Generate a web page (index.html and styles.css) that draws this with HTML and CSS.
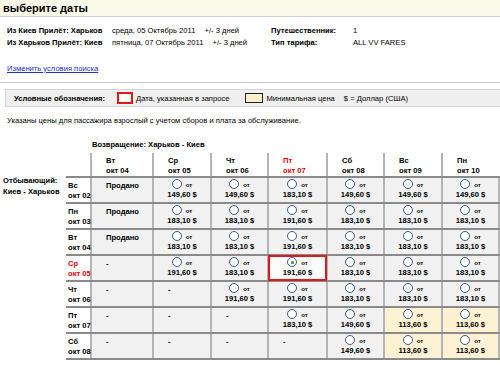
FILE: index.html
```html
<!DOCTYPE html>
<html lang="ru">
<head>
    <meta charset="UTF-8">
    <title>Выберите даты</title>
    <link rel="stylesheet" href="styles.css">
</head>
<body>
    <div class="page-title">выберите даты</div>

    <!-- Summary of the search -->
    <div class="trip-info">
        <span class="strong">Из Киев Прилёт: Харьков</span>
        <span>среда, 05 Октябрь 2011 <span class="flex">+/- 3 дней</span></span>
        <span class="strong">Путешественник:</span>
        <span>1</span>

        <span class="strong">Из Харьков Прилёт: Киев</span>
        <span>пятница, 07 Октябрь 2011 <span class="flex">+/- 3 дней</span></span>
        <span class="strong">Тип тарифа:</span>
        <span>ALL VV FARES</span>
    </div>

    <a class="change-link" href="#">Изменить условия поиска</a>
    <div class="divider"></div>

    <div class="legend">
        <span class="strong">Условные обозначения:</span>
        <span class="swatch swatch-request"></span>
        <span>Дата, указанная в запросе</span>
        <span class="swatch swatch-min"></span>
        <span>Минимальная цена</span>
        <span class="currency">$ = Доллар (США)</span>
    </div>

    <p class="note">Указаны цены для пассажира взрослый с учетом сборов и плата за обслуживание.</p>

    <div class="return-title">Возвращение: Харьков - Киев</div>

    <div class="matrix">
        <div class="outbound-title">Отбывающий:<br>Киев - Харьков</div>
        <table class="fares">
            <colgroup>
                <col style="width:25px">
                <col style="width:62px">
                <col style="width:58px">
                <col style="width:57px">
                <col style="width:59px">
                <col style="width:57px">
                <col style="width:58px">
                <col style="width:57px">
            </colgroup>
            <tr class="head">
                <th class="corner"></th>
                <th>Вт<br>окт 04</th>
                <th>Ср<br>окт 05</th>
                <th>Чт<br>окт 06</th>
                <th class="requested">Пт<br>окт 07</th>
                <th>Сб<br>окт 08</th>
                <th>Вс<br>окт 09</th>
                <th>Пн<br>окт 10</th>
            </tr>
            <tr>
                <th class="day">Вс<br>окт 02</th>
                <td class="text">Продано</td>
                <td><span class="pick"><span class="radio"></span>от</span><span class="price">149,60 $</span></td>
                <td><span class="pick"><span class="radio"></span>от</span><span class="price">149,60 $</span></td>
                <td><span class="pick"><span class="radio"></span>от</span><span class="price">183,10 $</span></td>
                <td><span class="pick"><span class="radio"></span>от</span><span class="price">149,60 $</span></td>
                <td><span class="pick"><span class="radio"></span>от</span><span class="price">149,60 $</span></td>
                <td><span class="pick"><span class="radio"></span>от</span><span class="price">149,60 $</span></td>
            </tr>
            <tr>
                <th class="day">Пн<br>окт 03</th>
                <td class="text">Продано</td>
                <td><span class="pick"><span class="radio"></span>от</span><span class="price">183,10 $</span></td>
                <td><span class="pick"><span class="radio"></span>от</span><span class="price">183,10 $</span></td>
                <td><span class="pick"><span class="radio"></span>от</span><span class="price">191,60 $</span></td>
                <td><span class="pick"><span class="radio"></span>от</span><span class="price">183,10 $</span></td>
                <td><span class="pick"><span class="radio"></span>от</span><span class="price">183,10 $</span></td>
                <td><span class="pick"><span class="radio"></span>от</span><span class="price">183,10 $</span></td>
            </tr>
            <tr>
                <th class="day">Вт<br>окт 04</th>
                <td class="text">Продано</td>
                <td><span class="pick"><span class="radio"></span>от</span><span class="price">183,10 $</span></td>
                <td><span class="pick"><span class="radio"></span>от</span><span class="price">183,10 $</span></td>
                <td><span class="pick"><span class="radio"></span>от</span><span class="price">191,60 $</span></td>
                <td><span class="pick"><span class="radio"></span>от</span><span class="price">183,10 $</span></td>
                <td><span class="pick"><span class="radio"></span>от</span><span class="price">183,10 $</span></td>
                <td><span class="pick"><span class="radio"></span>от</span><span class="price">183,10 $</span></td>
            </tr>
            <tr>
                <th class="day requested">Ср<br>окт 05</th>
                <td class="text">-</td>
                <td><span class="pick"><span class="radio"></span>от</span><span class="price">191,60 $</span></td>
                <td><span class="pick"><span class="radio"></span>от</span><span class="price">183,10 $</span></td>
                <td class="selected"><span class="pick"><span class="radio checked"></span>от</span><span class="price">191,60 $</span></td>
                <td><span class="pick"><span class="radio"></span>от</span><span class="price">183,10 $</span></td>
                <td><span class="pick"><span class="radio"></span>от</span><span class="price">183,10 $</span></td>
                <td><span class="pick"><span class="radio"></span>от</span><span class="price">183,10 $</span></td>
            </tr>
            <tr>
                <th class="day">Чт<br>окт 06</th>
                <td class="text">-</td>
                <td class="text">-</td>
                <td><span class="pick"><span class="radio"></span>от</span><span class="price">191,60 $</span></td>
                <td><span class="pick"><span class="radio"></span>от</span><span class="price">191,60 $</span></td>
                <td><span class="pick"><span class="radio"></span>от</span><span class="price">183,10 $</span></td>
                <td><span class="pick"><span class="radio"></span>от</span><span class="price">183,10 $</span></td>
                <td><span class="pick"><span class="radio"></span>от</span><span class="price">183,10 $</span></td>
            </tr>
            <tr>
                <th class="day">Пт<br>окт 07</th>
                <td class="text">-</td>
                <td class="text">-</td>
                <td class="text">-</td>
                <td><span class="pick"><span class="radio"></span>от</span><span class="price">183,10 $</span></td>
                <td><span class="pick"><span class="radio"></span>от</span><span class="price">149,60 $</span></td>
                <td class="cheapest"><span class="pick"><span class="radio"></span>от</span><span class="price">113,60 $</span></td>
                <td class="cheapest"><span class="pick"><span class="radio"></span>от</span><span class="price">113,60 $</span></td>
            </tr>
            <tr>
                <th class="day">Сб<br>окт 08</th>
                <td class="text">-</td>
                <td class="text">-</td>
                <td class="text">-</td>
                <td class="text">-</td>
                <td><span class="pick"><span class="radio"></span>от</span><span class="price">149,60 $</span></td>
                <td class="cheapest"><span class="pick"><span class="radio"></span>от</span><span class="price">113,60 $</span></td>
                <td class="cheapest"><span class="pick"><span class="radio"></span>от</span><span class="price">113,60 $</span></td>
            </tr>
        </table>
    </div>
</body>
</html>
```

FILE: styles.css
```css
/* Date matrix page: small tahoma-like text, grey table with radio fares */
body {
    font-family: "Liberation Sans", Arial, sans-serif;
    font-size: 7.6px;
    color: #000;
    background: white;
    margin: 0;
    padding: 0;
    overflow: hidden;
}
.strong {
    font-weight: bold;
}
.page-title {
    height: 16px;
    line-height: 16px;
    padding-left: 3px;
    font-size: 11px;
    font-weight: bold;
    background: #fbf9ea;
    border-bottom: 1px solid #cfcfcf;
}
.trip-info {
    display: grid;
    grid-template-columns: 105px 159px 82px auto;
    line-height: 12px;
    padding-left: 7px;
    margin-top: 8px;
}
.trip-info .flex {
    margin-left: 7px;
}
.change-link {
    display: inline-block;
    margin: 14px 0 0 7px;
    line-height: 12px;
    color: #2233cc;
    text-decoration: underline;
}
.divider {
    margin-top: 7px;
    border-top: 1px solid #c8c8c8;
}
.legend {
    display: flex;
    align-items: center;
    height: 16px;
    margin: 6px 0 0 5px;
    padding-left: 8px;
    background: #efefef;
    border: 1px solid #d4d4d4;
    border-right: none;
}
.swatch {
    width: 12px;
    height: 8px;
    margin: 0 3px 0 12px;
}
.swatch-request {
    background: white;
    border: 2px solid #e01818;
}
.swatch-min {
    width: 16px;
    margin-left: 16px;
    background: #fcf0cc;
    border: 1px solid #222;
}
.currency {
    margin-left: 9px;
}
.note {
    margin: 8px 0 0 7px;
    line-height: 12px;
}
.return-title {
    margin: 12px 0 0 92px;
    line-height: 12px;
    font-weight: bold;
}
.matrix {
    display: flex;
    margin-top: 2px;
}
.outbound-title {
    width: 63px;
    margin-left: 3px;
    padding-top: 22px;
    line-height: 11px;
    font-weight: bold;
    white-space: nowrap;
}
.fares {
    table-layout: fixed;
    width: 433px;
    border-collapse: collapse;
}
.fares th,
.fares td {
    padding: 0;
    vertical-align: top;
    text-align: left;
    font-weight: bold;
    line-height: 10px;
    white-space: nowrap;
}
.fares .head th {
    height: 19px;
    padding: 3px 0 0 14px;
    border-left: 2px solid #b4b4b4;
    border-bottom: 2px solid #8a8a8a;
}
.fares .head th.corner {
    border-left: none;
}
.fares th.day {
    height: 21px;
    padding: 3px 0 0 2px;
    border-bottom: 2px solid #8a8a8a;
    background: white;
}
.fares td {
    height: 24px;
    background: #f1f1f1;
    border-left: 2px solid #b4b4b4;
    border-right: 2px solid #b4b4b4;
    border-bottom: 2px solid #8a8a8a;
    text-align: center;
}
.fares td.text {
    height: 21px;
    padding: 3px 0 0 14px;
    text-align: left;
}
.fares .requested {
    color: #e80000;
}
.fares td.cheapest {
    background: #fcf1d2;
}
.fares td.selected {
    background: #fbfbfb;
    outline: 2px solid #e01818;
    outline-offset: -2px;
}
.pick {
    display: flex;
    justify-content: center;
    align-items: flex-end;
    margin-top: 1px;
    height: 10px;
    font-size: 6px;
    line-height: 7px;
}
.radio {
    width: 8px;
    height: 8px;
    margin-right: 4px;
    border: 1px solid #3a5a8e;
    border-radius: 50%;
    background: white;
    display: flex;
    align-items: center;
    justify-content: center;
}
.radio.checked::after {
    content: "";
    width: 3px;
    height: 3px;
    border-radius: 50%;
    background: #2a9a2a;
}
.price {
    display: block;
    line-height: 11px;
}
```
